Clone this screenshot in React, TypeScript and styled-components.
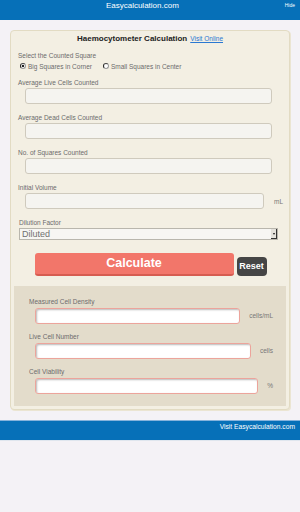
import styled, { createGlobalStyle } from "styled-components";

const Global = createGlobalStyle`
  body {
    margin: 0;
    background-color: #f4f2f6;
    font-family: "Liberation Sans", Arial, sans-serif;
  }
`;

const Header = styled.div`
  display: flex;
  height: 20px;
  background-color: #0670b8;
  color: #ffffff;

  .title {
    flex: 1;
    text-align: center;
    font-size: 8px;
    line-height: 12px;
  }

  .hide {
    font-size: 5px;
    line-height: 10px;
    padding-right: 5px;
  }
`;

const Card = styled.div`
  margin: 10px 10px 0;
  background-color: #f3efe3;
  border: 1px solid #e2dbc3;
  border-radius: 4px;
  padding-bottom: 3px;
  box-shadow: 1px 1px 0 #ebe5d2;
`;

const Title = styled.div`
  padding-top: 3px;
  text-align: center;
  font-size: 8px;
  line-height: 10px;
  font-weight: bold;
  color: #222;

  a {
    font-size: 6.5px;
    font-weight: normal;
    color: #2a78d2;
    margin-left: 3px;
  }
`;

const Section = styled.div`
  padding: 8px 6px 0 7px;
`;

const Label = styled.div<{ $indent?: number }>`
  font-size: 6.5px;
  line-height: 8px;
  color: #6b6b6b;
  margin-left: ${(p) => p.$indent || 0}px;
`;

const RadioRow = styled.div`
  display: flex;
  align-items: center;
  height: 8px;
  margin: 2px 0 8.7px 2px;
  font-size: 6.5px;
  color: #6b6b6b;
`;

const RadioItem = styled.label`
  display: flex;
  align-items: center;
  margin-right: 11px;
`;

const RadioDot = styled.span<{ $on?: boolean }>`
  box-sizing: border-box;
  width: 6px;
  height: 6px;
  border-radius: 50%;
  border: 1px solid #9a9a9a;
  border-left-color: #222;
  border-top-color: #444;
  background: ${(p) => (p.$on ? "radial-gradient(circle, #222 0 1.3px, #fff 1.6px)" : "#fff")};
  margin-right: 2px;
`;

const Field = styled.div`
  margin-bottom: 9.5px;
`;

const InputRow = styled.div<{ $indent: number; $right: number }>`
  display: flex;
  align-items: center;
  margin: 1.5px ${(p) => p.$right}px 0 ${(p) => p.$indent}px;
`;

const Input = styled.div`
  flex: 1;
  height: 16px;
  box-sizing: border-box;
  background-color: #f5f4f0;
  border: 1px solid #cfcabd;
  border-radius: 3px;
`;

const ResultInput = styled.div`
  flex: 1;
  height: 16px;
  box-sizing: border-box;
  background-color: #ffffff;
  border: 1px solid #eca49b;
  border-radius: 3px;
  box-shadow: inset 1px 1px 2px rgba(0, 0, 0, 0.28);
`;

const Unit = styled.span<{ $gap: number }>`
  margin-left: ${(p) => p.$gap}px;
  font-size: 6.5px;
  color: #777;
`;

const SelectBox = styled.div`
  display: flex;
  align-items: center;
  height: 12px;
  box-sizing: border-box;
  margin: 1.6px 5px 0 1px;
  background-color: #f7f6f3;
  border: 1px solid #b9b6ad;
  font-size: 9px;
  color: #707070;

  span {
    flex: 1;
    padding-left: 2px;
  }
`;

const SelectArrow = styled.div`
  width: 6px;
  height: 10px;
  box-sizing: border-box;
  background-color: #e4e2dc;
  border-right: 1px solid #333;
  border-bottom: 1px solid #333;
  display: flex;
  align-items: center;
  justify-content: center;

  &:after {
    content: "";
    border-left: 1.5px solid transparent;
    border-right: 1.5px solid transparent;
    border-top: 2px solid #111;
  }
`;

const ButtonRow = styled.div`
  display: flex;
  justify-content: center;
  align-items: flex-end;
  gap: 3px;
  margin-top: 12.5px;
`;

const CalcButton = styled.button`
  width: 199px;
  height: 23px;
  border: none;
  border-bottom: 2px solid #d65c50;
  border-radius: 3px;
  background-color: #f2766a;
  color: #ffffff;
  font-family: inherit;
  font-size: 12.5px;
  font-weight: bold;
  padding: 0;
`;

const ResetButton = styled.button`
  width: 30px;
  height: 19px;
  border: none;
  border-radius: 4px;
  background-color: #454545;
  color: #ffffff;
  font-family: inherit;
  font-size: 9px;
  font-weight: bold;
  padding: 0;
`;

const ResultPanel = styled.div`
  margin: 10px 3px 0;
  padding: 12.7px 13px 2.5px 15px;
  background-color: #e3dccb;
`;

const Footer = styled.div`
  margin-top: 10px;
  height: 19px;
  background-color: #0670b8;
  border-top: 1px solid #86b3dc;
  border-bottom: 1px solid #dfe6ee;
  color: #ffffff;
  text-align: right;
  padding-right: 5px;
  font-size: 6.7px;
  line-height: 11px;
`;

const inputs = [
  { label: "Average Live Cells Counted" },
  { label: "Average Dead Cells Counted" },
  { label: "No. of Squares Counted" },
  { label: "Initial Volume", unit: "mL" },
];

const results = [
  { label: "Measured Cell Density", unit: "cells/mL" },
  { label: "Live Cell Number", unit: "cells" },
  { label: "Cell Viability", unit: "%" },
];

const App = () => {
  return (
    <>
      <Global />
      <Header>
        <div className="title">Easycalculation.com</div>
        <div className="hide">Hide</div>
      </Header>
      <Card>
        <Title>
          Haemocytometer Calculation
          <a href="#">Visit Online</a>
        </Title>
        <Section>
          <Label>Select the Counted Square</Label>
          <RadioRow>
            <RadioItem>
              <RadioDot $on />
              Big Squares in Corner
            </RadioItem>
            <RadioItem>
              <RadioDot />
              Small Squares in Center
            </RadioItem>
          </RadioRow>
          {inputs.map((f) => (
            <Field key={f.label}>
              <Label>{f.label}</Label>
              <InputRow $indent={7} $right={f.unit ? 0 : 11}>
                <Input />
                {f.unit && <Unit $gap={10}>{f.unit}</Unit>}
              </InputRow>
            </Field>
          ))}
          <Label $indent={1}>Dilution Factor</Label>
          <SelectBox>
            <span>Diluted</span>
            <SelectArrow />
          </SelectBox>
          <ButtonRow>
            <CalcButton>Calculate</CalcButton>
            <ResetButton>Reset</ResetButton>
          </ButtonRow>
        </Section>
        <ResultPanel>
          {results.map((f) => (
            <Field key={f.label}>
              <Label>{f.label}</Label>
              <InputRow $indent={6} $right={0}>
                <ResultInput />
                <Unit $gap={9}>{f.unit}</Unit>
              </InputRow>
            </Field>
          ))}
        </ResultPanel>
      </Card>
      <Footer>Visit Easycalculation.com</Footer>
    </>
  );
};

export default App;
